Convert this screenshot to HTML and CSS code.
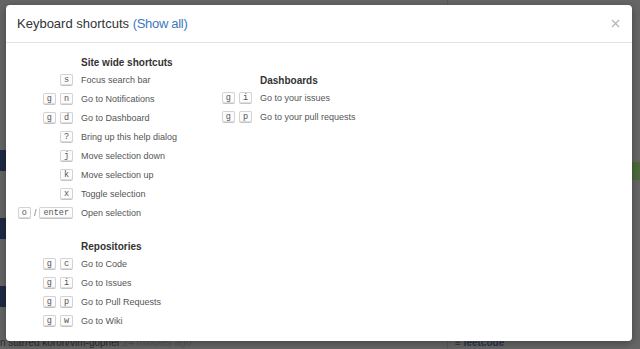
FILE: index.html
```html
<!DOCTYPE html>
<html lang="en">

<head>
    <meta charset="UTF-8">
    <meta name="viewport" content="width=device-width, initial-scale=1.0">
    <title>Keyboard shortcuts</title>
    <link rel="stylesheet" href="styles.css">
</head>

<body>
    <div class="page">
        <div class="feed">
            <div class="avatar first"></div>
            <div class="avatar"></div>
            <div class="avatar"></div>
            <div class="feed-line">n starred koron/vim-gopher <span class="ago">24 minutes ago</span></div>
        </div>
        <div class="sidebar">
            <div class="side-bar-green"></div>
            <div class="side-line"><span class="repo-icon">&#8801;</span> leetcode</div>
        </div>
    </div>

    <div class="modal">
        <div class="modal-header">
            <h2 class="modal-title">Keyboard shortcuts <a class="show-all" href="#">(Show all)</a></h2>
            <svg class="close" width="9" height="9" viewBox="0 0 9 9">
                <path d="M1 1 L8 8 M8 1 L1 8" stroke="#b5b5b5" stroke-width="1.3" fill="none"/>
            </svg>
        </div>

        <div class="modal-body">
            <div class="column left-col">
                <div class="section">
                    <div class="heading">Site wide shortcuts</div>
                    <div class="row"><span class="keys"><kbd>s</kbd></span><span class="desc">Focus search bar</span></div>
                    <div class="row"><span class="keys"><kbd>g</kbd><kbd>n</kbd></span><span class="desc">Go to Notifications</span></div>
                    <div class="row"><span class="keys"><kbd>g</kbd><kbd>d</kbd></span><span class="desc">Go to Dashboard</span></div>
                    <div class="row"><span class="keys"><kbd>?</kbd></span><span class="desc">Bring up this help dialog</span></div>
                    <div class="row"><span class="keys"><kbd>j</kbd></span><span class="desc">Move selection down</span></div>
                    <div class="row"><span class="keys"><kbd>k</kbd></span><span class="desc">Move selection up</span></div>
                    <div class="row"><span class="keys"><kbd>x</kbd></span><span class="desc">Toggle selection</span></div>
                    <div class="row"><span class="keys"><kbd>o</kbd><span class="slash">/</span><kbd>enter</kbd></span><span class="desc">Open selection</span></div>
                </div>

                <div class="section repos">
                    <div class="heading">Repositories</div>
                    <div class="row"><span class="keys"><kbd>g</kbd><kbd>c</kbd></span><span class="desc">Go to Code</span></div>
                    <div class="row"><span class="keys"><kbd>g</kbd><kbd>i</kbd></span><span class="desc">Go to Issues</span></div>
                    <div class="row"><span class="keys"><kbd>g</kbd><kbd>p</kbd></span><span class="desc">Go to Pull Requests</span></div>
                    <div class="row"><span class="keys"><kbd>g</kbd><kbd>w</kbd></span><span class="desc">Go to Wiki</span></div>
                </div>
            </div>

            <div class="column right-col">
                <div class="section">
                    <div class="heading">Dashboards</div>
                    <div class="row"><span class="keys"><kbd>g</kbd><kbd>i</kbd></span><span class="desc">Go to your issues</span></div>
                    <div class="row"><span class="keys"><kbd>g</kbd><kbd>p</kbd></span><span class="desc">Go to your pull requests</span></div>
                </div>
            </div>
        </div>
    </div>
</body>

</html>
```

FILE: styles.css
```css
body {
    margin: 0;
    overflow: hidden;
    background-color: #666;
    font-family: "Liberation Sans", Arial, sans-serif;
}

/* page behind the overlay */
.page {
    height: 349px;
    display: flex;
}

.feed {
    width: 447px;
    border-right: 1px solid #5c5c5c;
    display: flex;
    flex-direction: column;
}

.avatar {
    width: 6px;
    height: 21px;
    margin-top: 47px;
    background-color: #1e2a45;
}

.avatar.first {
    margin-top: 150px;
}

.feed-line {
    margin-top: auto;
    height: 12px;
    line-height: 12px;
    font-size: 10px;
    color: #2e2e2e;
    white-space: nowrap;
}

.ago {
    color: #555;
}

.sidebar {
    flex: 1;
    display: flex;
    flex-direction: column;
}

.side-bar-green {
    margin-top: 162px;
    margin-left: auto;
    width: 8px;
    height: 18px;
    background-color: #4d6a3c;
}

.side-line {
    margin-top: auto;
    height: 12px;
    line-height: 12px;
    padding-left: 7px;
    font-size: 10px;
    font-weight: bold;
    color: #2c3448;
}

.repo-icon {
    font-weight: normal;
}

/* modal */
.modal {
    position: absolute;
    top: 5px;
    left: 6px;
    width: 626px;
    height: 336px;
    background-color: #fff;
    border-radius: 4px;
    box-shadow: 0 2px 8px rgba(0, 0, 0, 0.35);
    overflow: hidden;
}

.modal-header {
    height: 37px;
    border-bottom: 1px solid #e3e3e3;
    display: flex;
    align-items: center;
    justify-content: space-between;
    padding: 0 12px 0 11px;
}

.modal-title {
    margin: 0;
    font-size: 13px;
    font-weight: normal;
    color: #333;
}

.show-all {
    color: #4078c0;
    text-decoration: none;
    letter-spacing: -0.3px;
}

.modal-body {
    display: flex;
    padding: 9px 0 0 11px;
}

.left-col {
    width: 179px;
}

.right-col {
    padding-top: 18px;
}

.repos {
    margin-top: 14px;
}

.heading {
    height: 14px;
    padding-top: 4px;
    line-height: 14px;
    padding-left: 64px;
    font-size: 10px;
    font-weight: bold;
    color: #333;
}

.row {
    height: 19px;
    display: flex;
    align-items: center;
}

.keys {
    width: 56px;
    display: flex;
    justify-content: flex-end;
    align-items: center;
    gap: 4px;
}

.desc {
    margin-left: 8px;
    font-size: 9px;
    color: #555;
    white-space: nowrap;
}

.slash {
    font-size: 9px;
    color: #777;
    margin: 0 -1px;
}

kbd {
    display: inline-block;
    height: 10px;
    line-height: 10px;
    padding: 0 3px;
    font-family: "Liberation Mono", "DejaVu Sans Mono", monospace;
    font-size: 8.5px;
    color: #555;
    background-color: #fcfcfc;
    border: 1px solid #d3d3d3;
    border-bottom-color: #c4c4c4;
    border-radius: 2px;
    box-shadow: inset 0 -1px 0 #ddd;
}
```
